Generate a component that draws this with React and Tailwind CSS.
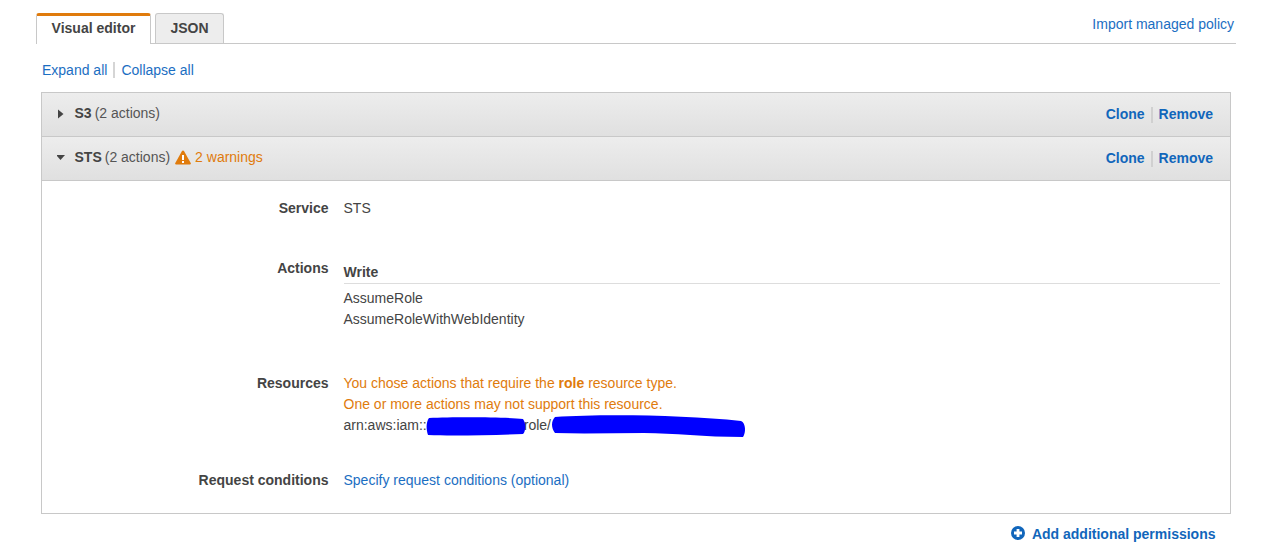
import React from "react";

const Caret = ({ down }) => (
  <svg width="8" height="10" viewBox="0 0 8 10" className="shrink-0">
    {down ? <path d="M0 3h9L4.500 8z" fill="#444" transform="translate(-1 -1)" /> : <path d="M1 0.500l5.500 4.500L1 9.500z" fill="#444" />}
  </svg>
);

function Header({ open, name, children }) {
  return (
    <div className="flex h-[44px] items-center justify-between border-b border-[#c8c8c8] bg-gradient-to-b from-[#ededed] to-[#e0e0e0] pl-[15px] pr-[17px]">
      <div className="flex items-center pb-[2px]">
        <span className="flex w-[17.500px]"><Caret down={open} /></span>
        <span className="font-bold text-[#444]">{name}</span>
        <span className="ml-[3px] text-[#555]">(2 actions)</span>
        {children}
      </div>
      <div className="flex items-center font-bold text-[#1166bb]">
        <span>Clone</span>
        <span className="mx-[6px] h-4 w-[2px] bg-[#d0d0d0]" />
        <span>Remove</span>
      </div>
    </div>
  );
}

function Row({ label, className, children }) {
  return (
    <div className={`flex ${className}`}>
      <div className="w-[286.500px] shrink-0 text-right font-bold leading-[21px] text-[#444]">{label}</div>
      <div className="ml-[15px] flex-1 leading-[21px] text-[#444]">{children}</div>
    </div>
  );
}

export default function App() {
  return (
    <div className="h-[550px] w-[1275px] overflow-hidden bg-white pl-[36px] pt-[13px] text-[14px] font-['Liberation_Sans',Arial,sans-serif]">
      <div className="flex h-[31px] w-[1200px] items-end border-b border-[#c8c8c8]">
        <div className="mb-[-1px] flex h-[31px] w-[115px] items-center justify-center rounded-t-[3px] border-x border-[#c8c8c8] border-t-[3px] border-t-[#e07b0c] bg-white pb-[4px] font-bold text-[#444]">
          Visual editor
        </div>
        <div className="ml-1 flex h-[30px] w-[69px] items-center justify-center rounded-t-[3px] border-x border-t border-[#c8c8c8] bg-[#ededed] font-bold text-[#444]">
          JSON
        </div>
        <span className="ml-auto mb-[8px] pr-[2px] text-[#1b6ec2]">Import managed policy</span>
      </div>

      <div className="ml-[6px] mt-[17px] flex h-[18px] items-center text-[#1b6ec2]">
        <span>Expand all</span>
        <span className="mx-[6px] h-4 w-[2px] bg-[#d5d5d5]" />
        <span>Collapse all</span>
      </div>

      <div className="ml-[5px] mt-[13px] h-[422px] w-[1190px] border border-[#c8c8c8]">
        <Header name="S3" />
        <Header open name="STS">
          <svg width="16" height="15" viewBox="0 0 16 15" className="ml-[4.500px]">
            <path d="M8 0.500c.5 0 .8.300 1 .600l6.700 12c.400.700 0 1.400-.800 1.400H1.100c-.800 0-1.200-.700-.800-1.400L7 1.100c.200-.300.500-.600 1-.600z" fill="#e07b0c" />
            <rect x="7" y="5" width="2" height="5" fill="#fff" />
            <rect x="7" y="11" width="2" height="2" fill="#fff" />
          </svg>
          <span className="ml-[4.500px] text-[#e07b0c]">2 warnings</span>
        </Header>

        <div className="pt-[17px]">
          <Row label="Service" className="h-[60px]">STS</Row>
          <Row label="Actions" className="h-[115px]">
            <div className="mr-[10px] mt-[1px] h-[25px] border-b border-[#dddddd] pt-[4px] font-bold leading-[18px]">Write</div>
            <div className="mt-[4px]">AssumeRole</div>
            <div>AssumeRoleWithWebIdentity</div>
          </Row>
          <Row label="Resources" className="h-[97px]">
            <div className="text-[#e07b0c]">You chose actions that require the <b>role</b> resource type.</div>
            <div className="text-[#e07b0c]">One or more actions may not support this resource.</div>
            <div className="relative flex">
              <span>arn:aws:iam::</span>
              <span className="ml-[97px]">role/</span>
              <svg width="404" height="28" viewBox="0 0 404 28" className="absolute left-[80px] top-[-2px]">
                <path d="M5 5 C30 4 80 4 99 6 C102 10 102 18 99 21 C70 22 30 23 4 22 C2 16 2 9 5 5Z" fill="#0000ff" />
                <path d="M131 4 C180 1 260 2 317 8 C322 10 322 20 319 24 C280 24 250 20 220 20 C190 20 160 21 131 20 C127 15 127 8 131 4Z" fill="#0000ff" />
              </svg>
            </div>
          </Row>
          <Row label="Request conditions">
            <span className="text-[#1b6ec2]">Specify request conditions (optional)</span>
          </Row>
        </div>
      </div>

      <div className="mt-[10px] flex w-[1179.500px] items-center justify-end font-bold text-[#1166bb]">
        <svg width="14" height="14" viewBox="0 0 14 14" className="mb-[3px] mr-[6.500px]">
          <circle cx="7" cy="7" r="7" fill="#1166bb" />
          <path d="M3 7h8M7 3v8" stroke="#fff" strokeWidth="2.800" />
        </svg>
        <span>Add additional permissions</span>
      </div>
    </div>
  );
}
